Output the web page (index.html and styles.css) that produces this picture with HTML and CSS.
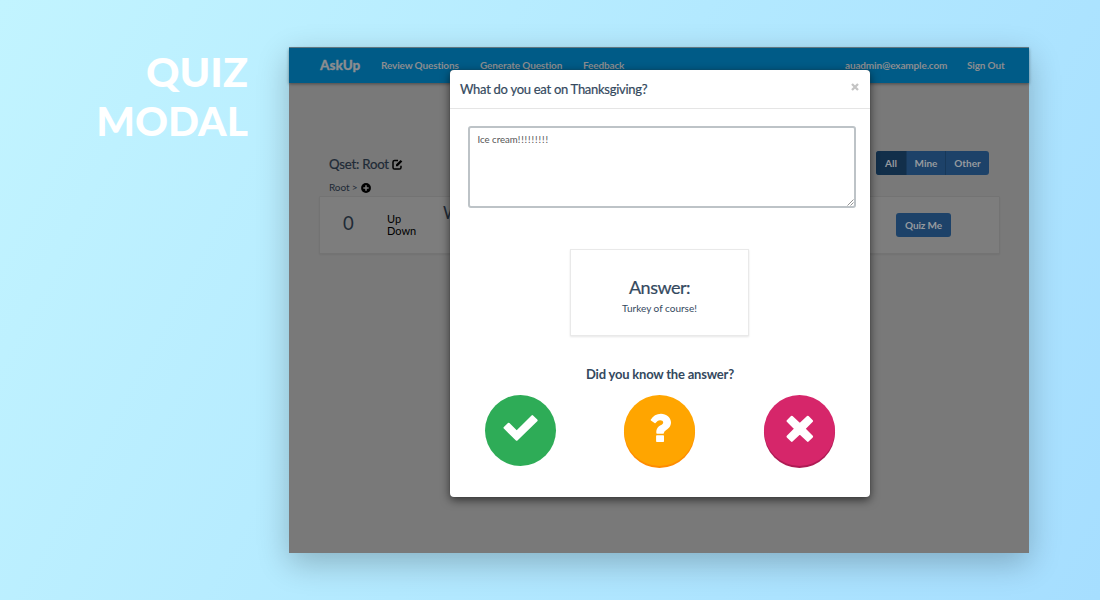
FILE: index.html
```html
<!DOCTYPE html>
<html lang="en">
<head>
<meta charset="utf-8">
<title>Quiz Modal</title>
<link rel="stylesheet" href="styles.css">
</head>
<body>
<main class="slide">
  <h1 class="title"><span class="title-top">QUIZ</span><span class="title-bottom">MODAL</span></h1>
  <div class="window">
    <nav class="nav">
      <a class="brand">AskUp</a>
      <a class="review">Review Questions</a>
      <a class="generate">Generate Question</a>
      <a class="feedback">Feedback</a>
      <a class="account">auadmin@example.com</a>
      <a class="signout">Sign Out</a>
    </nav>
    <div class="page">
      <header class="page-head">
        <div>
          <h2 class="qset">Qset: Root
            <svg class="edit" viewBox="0 0 11 11"><path d="M6 1.500H2.600Q1 1.500 1 3.100V8.400Q1 10 2.600 10H7.400Q9 10 9 8.400V6.700" fill="none" stroke="#000" stroke-width="1.500"/><path d="M4 5.500 8.600.900 10.300 2.600 5.700 7.200H4z"/></svg>
          </h2>
          <p class="crumb">Root &gt;
            <svg class="plus" viewBox="0 0 10 10"><circle cx="5" cy="5" r="4.900"/><path d="M5 2.300v5.400M2.300 5h5.400" stroke="#797979" stroke-width="1.500"/></svg>
          </p>
        </div>
        <div class="filter"><span class="on">All</span><span class="mine">Mine</span><span class="other">Other</span></div>
      </header>
      <section class="row">
        <span class="count">0</span>
        <span class="votes">Up<br>Down</span>
        <span class="name">W</span>
        <span class="quiz">Quiz Me</span>
      </section>
    </div>
    <section class="modal">
      <header class="modal-head"><h3>What do you eat on Thanksgiving?</h3>
        <svg class="close" viewBox="0 0 8 8"><path d="M1 1 7 7M7 1 1 7" stroke="#c4c4c4" stroke-width="2.300"/></svg>
      </header>
      <div class="modal-body">
        <div class="input"><p>Ice cream<span class="marks">!!!!!!!!!</span></p>
          <svg class="grip" viewBox="0 0 7 7"><path d="M.5 6.500 6.500.500M3.500 6.500 6.500 3.500" stroke="#777" stroke-width=".8"/></svg>
        </div>
        <div class="answer"><h4>Answer:</h4><p>Turkey of course!</p></div>
        <p class="ask">Did you know the answer?</p>
        <div class="choices">
          <span class="choice yes"><svg viewBox="0 0 71 71"><path d="M23.700 28.900 31.700 36.700 47.300 21.200 51.500 25.400 31.700 44.700 19.600 32.800z" fill="#fff" stroke="#fff" stroke-width="2.200" stroke-linejoin="round"/></svg></span>
          <span class="choice maybe"><svg viewBox="0 0 71 71"><path d="M32.800 40.300h6.500q.7 0 .7.700v5.300q0 .7-.7.700h-6.500q-.7 0-.7-.7V41q0-.7.700-.7zM26.700 24.700Q30.200 18.700 37 18.700C42.300 18.700 47 22.600 47 27.300C47 31.500 44.500 33.600 42.200 35Q39.900 36.300 39.900 38Q39.900 38.700 39.200 38.700H33Q32.300 38.700 32.300 37.700C32.300 33.300 34.400 31.500 36.600 30.300C38.300 29.400 39.200 28.700 39.200 27.500C39.200 26 37.800 25.200 36.200 25.200C34 25.200 33 26.300 31.500 28.100Q31.100 28.500 30.600 28.100L26.900 25.400Q26.500 25.100 26.700 24.700z" fill="#fff"/></svg></span>
          <span class="choice no"><svg viewBox="0 0 71 71"><path d="M27.800 21.800 35.800 29.300 43.800 21.800 48 26 40.300 33.800 48 41.600 43.800 45.800 35.800 38.300 27.800 45.800 23.600 41.600 31.300 33.800 23.600 26z" fill="#fff" stroke="#fff" stroke-width="2.200" stroke-linejoin="round"/></svg></span>
        </div>
      </div>
    </section>
  </div>
</main>
</body>
</html>
```
FILE: styles.css
```css
* { box-sizing: border-box; margin: 0; padding: 0; }
body { font-family: Lato, sans-serif; color: #34495e; }
svg { display: block; flex: none; }
.slide { display: flex; width: 1100px; height: 600px; overflow: hidden; background: linear-gradient(118deg, #c2f4ff 0%, #b3e9ff 50%, #a6deff 100%); }
.title { width: 248px; margin-right: 41px; padding-top: 48px; font: 900 39px/49px Lato, sans-serif; color: #fff; text-align: right; flex: none; }
.title span { display: block; transform-origin: right; white-space: nowrap; }
.title-top { transform: scaleX(1.06); }
.title-bottom { transform: scaleX(1.045); }
.window { position: relative; width: 740px; height: 506px; margin-top: 47px; border-top: 1px solid #68808a; background: #797979; box-shadow: 0 10px 30px rgba(0,0,0,.24); flex: none; }
.nav { display: flex; align-items: center; height: 35px; padding: 0 0 2px 31px; background: #005b87; box-shadow: 0 1px 3px rgba(0,0,0,.4); color: #8b8d90; font-size: 10px; font-weight: 700; letter-spacing: -.15px; white-space: nowrap; }
.nav a { flex: none; }
.brand { width: 61px; font-size: 13.500px; font-weight: 900; letter-spacing: 0; -webkit-text-stroke: .3px; }
.review { width: 99px; }
.generate { width: 103px; }
.feedback { width: 262px; }
.account { width: 122px; }
.page { padding: 67px 30px 0; color: #202a36; }
.page-head { display: flex; justify-content: space-between; height: 46px; padding: 0 10px; }
.qset { display: flex; gap: 3px; align-items: center; margin-top: 6px; font-size: 13.200px; font-weight: 400; line-height: 16px; letter-spacing: -.2px; -webkit-text-stroke: .2px; }
.edit { width: 11px; height: 11px; }
.crumb { display: flex; align-items: center; gap: 3px; margin-top: 9px; font-size: 10px; line-height: 13px; letter-spacing: -.1px; }
.plus { width: 10px; height: 10px; }
.filter { display: flex; width: 113px; height: 24px; margin-top: 1px; border-radius: 3px; overflow: hidden; background: #1d4269; color: #969a9f; font-size: 10px; font-weight: 700; line-height: 24px; text-align: center; }
.on { width: 30px; background: #122f4a; }
.mine { width: 39px; border-left: 1px solid #173859; }
.other { width: 44px; border-left: 1px solid #173859; }
.row { display: flex; align-items: center; width: 681px; height: 58px; border: 1px solid #737373; border-radius: 1px; background: #7d7d7d; box-shadow: 0 1px 2px rgba(0,0,0,.06); }
.count { width: 67px; padding-left: 23px; font-size: 18.500px; margin-top: -4px; }
.votes { width: 56px; color: #000; font-size: 11px; line-height: 12px; }
.name { width: 453px; font-size: 17px; margin-top: -25px; }
.quiz { width: 55px; height: 24px; border-radius: 3px; background: #1d4269; color: #969a9f; font-size: 10px; font-weight: 700; line-height: 24px; letter-spacing: -.15px; text-align: center; }
.modal { position: absolute; left: 161px; top: 22px; width: 420px; height: 427px; border-radius: 4px; background: #fff; box-shadow: 0 0 1px #444, 0 3px 10px rgba(0,0,0,.6); }
.modal-head { display: flex; justify-content: space-between; height: 39px; padding: 10px 11px 0 10px; border-bottom: 1px solid #e5e5e5; }
.modal-head h3 { font-size: 13px; font-weight: 400; line-height: 18px; letter-spacing: -.28px; -webkit-text-stroke: .2px; }
.close { width: 8px; height: 8px; margin-top: 3px; }
.modal-body { display: flex; flex-direction: column; align-items: center; padding-top: 17px; }
.input { display: flex; justify-content: space-between; width: 388px; height: 82px; margin-left: 3px; padding: 6px 0 0 8px; border: 2px solid #bdc3c7; border-radius: 3px; color: #555; font-size: 9.600px; line-height: 12px; }
.marks { letter-spacing: .9px; }
.grip { width: 7px; height: 7px; align-self: flex-end; }
.answer { width: 179px; height: 87px; margin-top: 41px; margin-right: 1px; padding-top: 25px; border: 1px solid #e9e9e9; box-shadow: 0 1px 2px rgba(0,0,0,.1); text-align: center; }
.answer h4 { font-size: 18px; font-weight: 400; line-height: 24px; letter-spacing: -.5px; -webkit-text-stroke: .2px; }
.answer p { margin-top: 3px; font-size: 10px; line-height: 13px; }
.ask { margin-top: 29px; font-size: 13px; font-weight: 700; line-height: 18px; letter-spacing: -.2px; }
.choices { display: flex; justify-content: space-between; width: 350px; margin-top: 12px; margin-left: -1px; }
.choice { width: 71px; height: 71px; border-radius: 50%; }
.yes { background: #2eac57; }
.maybe { background: #ffa500; box-shadow: 0 2px 0 #ff8c00; }
.no { background: #d6266a; box-shadow: 0 2px 0 #ae1b54; }
```
